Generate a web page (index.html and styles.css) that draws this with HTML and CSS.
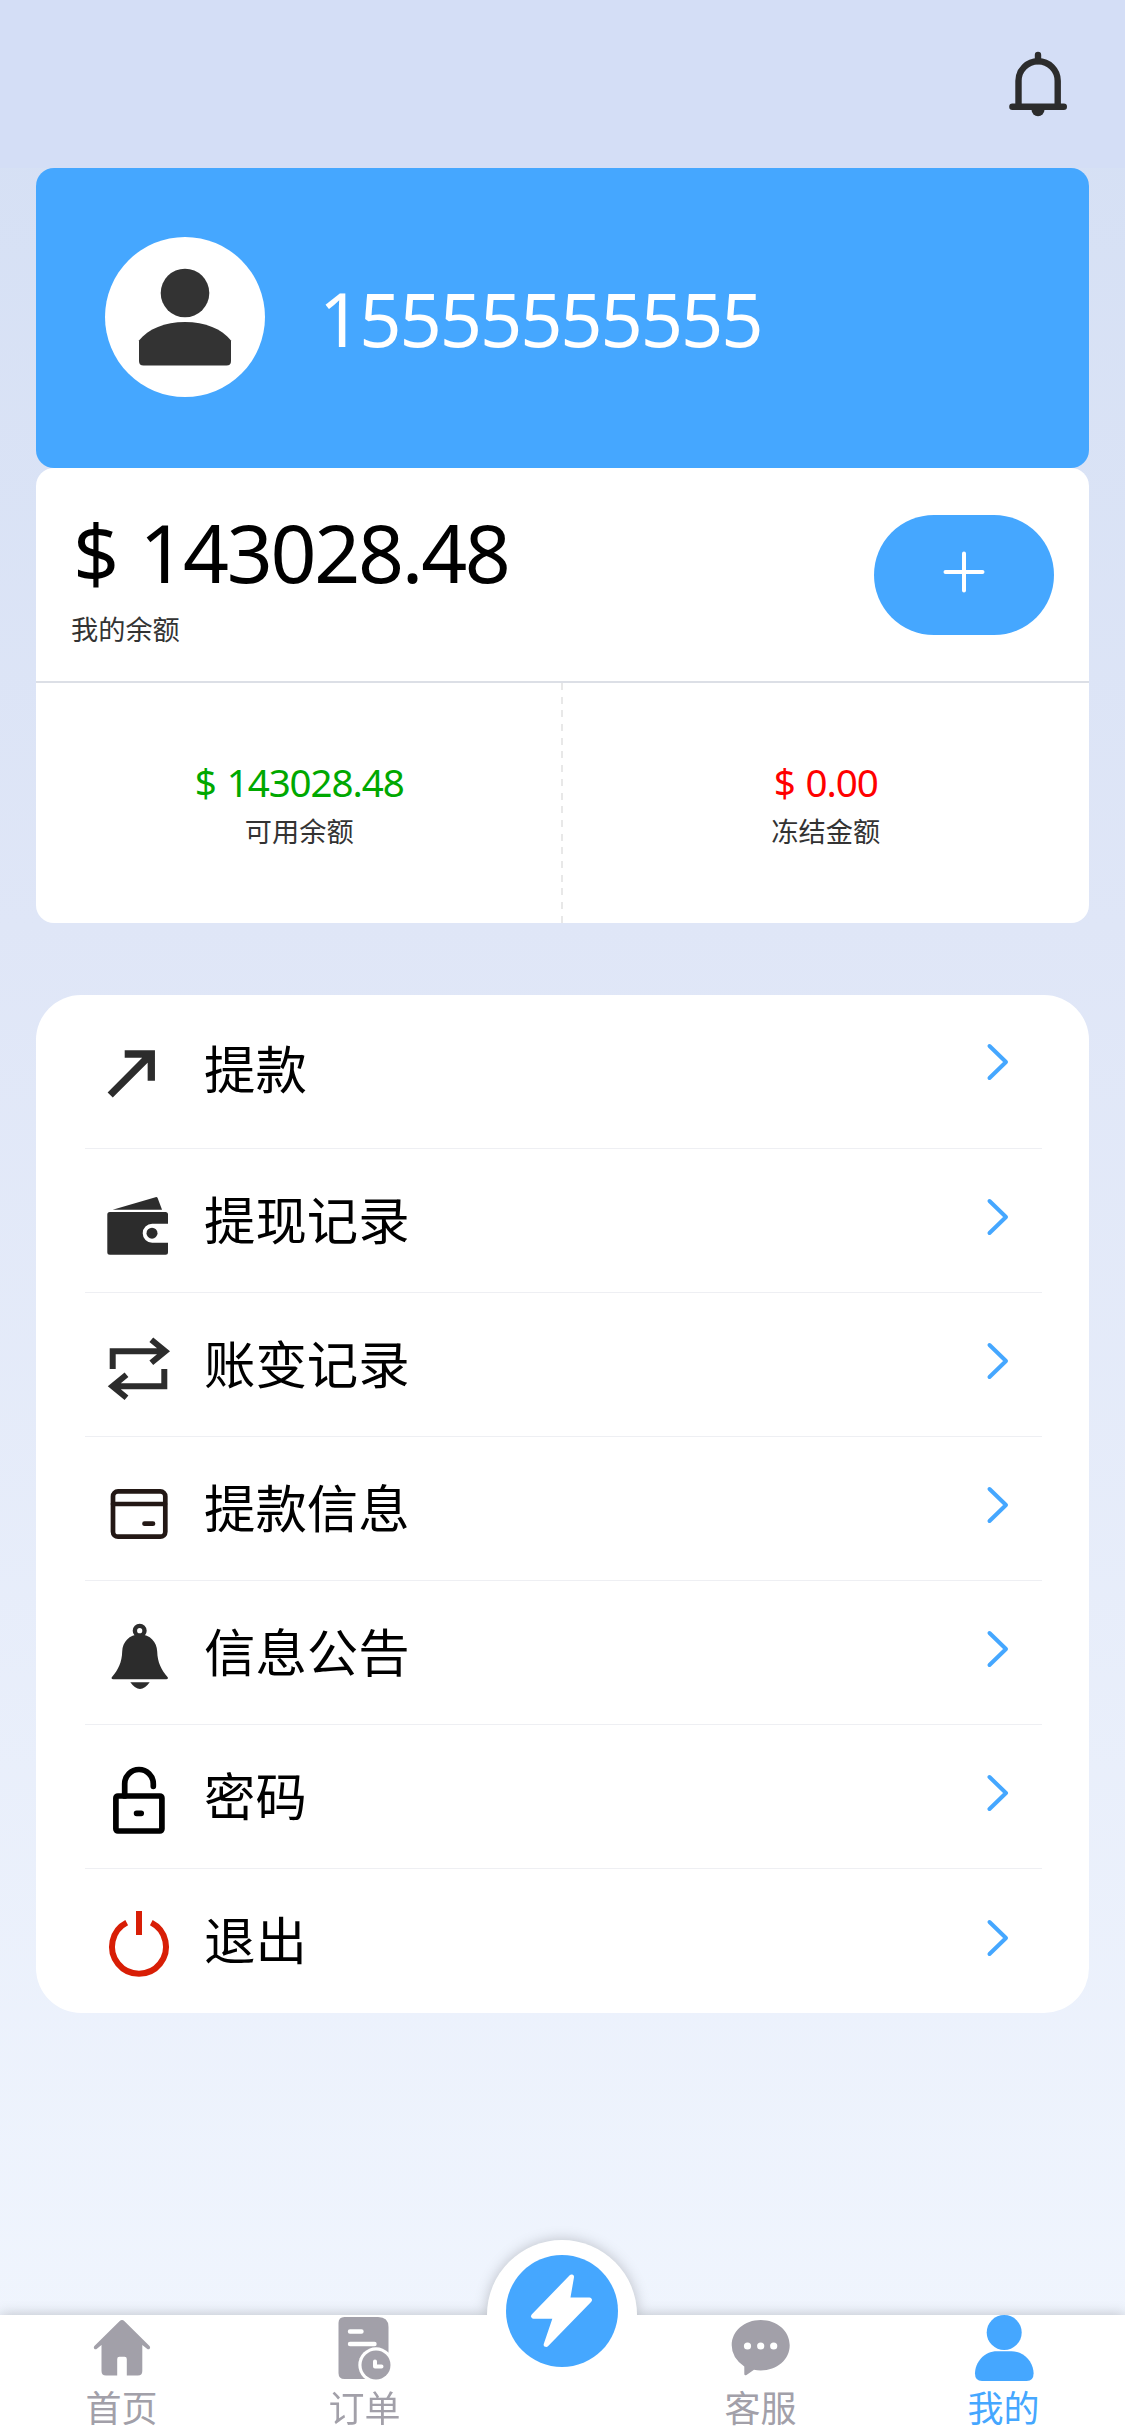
FILE: index.html
```html
<!DOCTYPE html>
<html lang="zh-CN">
<head>
<meta charset="utf-8">
<title>我的</title>
<link rel="stylesheet" href="styles.css">
</head>
<body>
<div class="page">
  <header class="header">
    <svg class="header-bell" viewBox="0 0 60 68" fill="none" stroke="#2c2c2c" stroke-width="6.4" stroke-linecap="round">
      <path d="M30 5v6M4.4 56.7h51.4"/>
      <path d="M10.5 55V30.8a19.6 19.6 0 0 1 39.2 0V55"/>
      <path d="M23.5 59.5a6.5 6.8 0 0 0 13 0z" fill="#2c2c2c" stroke="none"/>
    </svg>
  </header>

  <main class="content">
    <section class="profile">
      <div class="avatar">
        <svg viewBox="0 0 160 160" fill="#333">
          <circle cx="80" cy="56" r="24.3"/>
          <path d="M34 103.5C43 92 60 85 80 85s37 7 46 18.500V124q0 4.500-4.500 4.500h-83q-4.500 0-4.500-4.500z"/>
        </svg>
      </div>
      <span class="phone">15555555555</span>
    </section>

    <section class="balance">
      <div class="balance-total">
        <div>
          <div class="total-amount">$ 143028.48</div>
          <div class="label">我的余额</div>
        </div>
        <button class="add" aria-label="充值">
          <svg viewBox="0 0 42 42" stroke="#fff" stroke-width="4" stroke-linecap="round"><path d="M21 2.500v37M2.500 21h37"/></svg>
        </button>
      </div>
      <div class="balance-split">
        <div class="split-cell">
          <div class="amount available">$ 143028.48</div>
          <div class="label">可用余额</div>
        </div>
        <div class="split-cell">
          <div class="amount frozen">$ 0.00</div>
          <div class="label">冻结金额</div>
        </div>
      </div>
    </section>

    <nav class="menu">
      <a class="menu-row">
        <svg class="menu-icon" viewBox="0 0 66 72" fill="none" stroke="#2c2c2c" stroke-width="7.3"><path d="M5.200 61L45.500 20.700M19.700 20h26.600v26.700"/></svg>
        <span class="menu-text">提款</span>
        <svg class="chevron" viewBox="0 0 22 38"><path d="M2.500 3L19 19 2.500 35"/></svg>
      </a>
      <a class="menu-row">
        <svg class="menu-icon" viewBox="0 0 66 72" fill="#2c2c2c">
          <path d="M7.700 24.700L50.500 12.200q1.700-.4 2.300 1.200l4.200 11.300z"/>
          <path d="M4.800 27h55.700q2.500 0 2.500 2.500v9.200H47.200a9.500 9.500 0 0 0 0 19H63v9.500q0 2.500-2.500 2.500H4.800q-2.500 0-2.500-2.500V29.500q0-2.500 2.500-2.500z"/>
          <circle cx="47" cy="48.200" r="5.500"/>
        </svg>
        <span class="menu-text">提现记录</span>
        <svg class="chevron" viewBox="0 0 22 38"><path d="M2.500 3L19 19 2.500 35"/></svg>
      </a>
      <a class="menu-row">
        <svg class="menu-icon" viewBox="0 0 66 72" fill="none" stroke="#2c2c2c" stroke-width="6">
          <path d="M7.700 40V22.300h52M46.300 10.800l14 11.500-14 11.500"/>
          <path d="M59.300 40v17.300h-52M21.500 45.800l-14 11.500 14 11.500"/>
        </svg>
        <span class="menu-text">账变记录</span>
        <svg class="chevron" viewBox="0 0 22 38"><path d="M2.500 3L19 19 2.500 35"/></svg>
      </a>
      <a class="menu-row">
        <svg class="menu-icon" viewBox="0 0 66 72" fill="none" stroke="#231815" stroke-width="4.700" stroke-linecap="round">
          <rect x="8" y="18.400" width="52.300" height="45.300" rx="5"/>
          <path d="M8 31h52M39.500 50.700h8.500"/>
        </svg>
        <span class="menu-text">提款信息</span>
        <svg class="chevron" viewBox="0 0 22 38"><path d="M2.500 3L19 19 2.500 35"/></svg>
      </a>
      <a class="menu-row">
        <svg class="menu-icon" viewBox="0 0 66 72" fill="#2c2c2c">
          <circle cx="34.700" cy="13.700" r="4.800" fill="none" stroke="#2c2c2c" stroke-width="4.400"/>
          <path d="M34.700 17.500c10.500 0 17.100 7.500 17.500 17 .3 11 4 18 10.300 25.500 1 1.200.3 2.300-1.200 2.300H8.200c-1.500 0-2.200-1.100-1.200-2.300C13.300 52.500 16.900 45.500 17.200 34.500c.4-9.500 7-17 17.500-17z"/>
          <path d="M25.300 65.200h19.400q-9.700 13.500-19.400 0z"/>
        </svg>
        <span class="menu-text">信息公告</span>
        <svg class="chevron" viewBox="0 0 22 38"><path d="M2.500 3L19 19 2.500 35"/></svg>
      </a>
      <a class="menu-row">
        <svg class="menu-icon" viewBox="0 0 66 72" fill="none" stroke="#000" stroke-width="5.700" stroke-linecap="round">
          <rect x="10.900" y="35" width="46" height="35" rx="2"/>
          <path d="M19.700 35V22.800a14.300 14.300 0 0 1 28.600 0v2.500M31.600 52.300h4.600"/>
        </svg>
        <span class="menu-text">密码</span>
        <svg class="chevron" viewBox="0 0 22 38"><path d="M2.500 3L19 19 2.500 35"/></svg>
      </a>
      <a class="menu-row">
        <svg class="menu-icon" viewBox="0 0 66 72" fill="none" stroke="#d81e06" stroke-width="6">
          <path d="M21.700 17.700A27 27 0 1 0 46.300 17.700M34 6v24"/>
        </svg>
        <span class="menu-text">退出</span>
        <svg class="chevron" viewBox="0 0 22 38"><path d="M2.500 3L19 19 2.500 35"/></svg>
      </a>
    </nav>
  </main>

  <footer class="tabbar">
    <a class="tab">
      <svg class="tab-icon" viewBox="0 0 72 66" fill="#a2a0a9">
        <path d="M33.500 6.200q2.500-2.400 5 0L63.500 31q1.200 1.400.2 2.700-1.300 1.200-2.700 0L56.300 30v26q0 4.500-4.500 4.500H40.800V44q0-2.200-2.200-2.200h-5.200q-2.200 0-2.200 2.200v16.500H20q-4.500 0-4.500-4.500V30l-4.600 3.700q-1.400 1.200-2.700 0-1-1.300.2-2.700z"/>
      </svg>
      <span>首页</span>
    </a>
    <a class="tab">
      <svg class="tab-icon" viewBox="0 0 72 66" fill="#a2a0a9">
        <path d="M15.500 2H49q10.500 0 10.500 10V64h-44q-6 0-6-6V8q0-6 6-6z"/>
        <path d="M21 16.500h11.500M21 29h24.500" stroke="#fff" stroke-width="4.400" stroke-linecap="round"/>
        <path d="M47 50h20v18H35z" fill="#fff"/>
        <circle cx="47" cy="50" r="17.700" fill="#fff"/>
        <circle cx="47" cy="50" r="14.500"/>
        <path d="M46 46.500v5h6.500" fill="none" stroke="#fff" stroke-width="4" stroke-linecap="round" stroke-linejoin="round"/>
      </svg>
      <span>订单</span>
    </a>
    <a class="tab-center">
      <span class="bolt">
        <svg viewBox="0 0 112 112" fill="#fff" stroke="#fff" stroke-width="5" stroke-linejoin="round"><path d="M65.500 22L27.500 61.200H49.800L40.200 89.500 83.500 45H61.500z"/></svg>
      </span>
    </a>
    <a class="tab">
      <svg class="tab-icon" viewBox="0 0 72 66" fill="#a2a0a9">
        <path d="M35.700 5C52 5 64.700 16 64.700 30.300S52 55.500 35.700 55.500q-3.700 0-6.700-.7l-7.500 5.200q-2.200 1-2.200-1.200v-7.300Q6.700 43 6.700 30.300C6.700 16 19.500 5 35.700 5z"/>
        <g fill="#fff"><circle cx="22.500" cy="31" r="3.600"/><circle cx="35.700" cy="31" r="3.600"/><circle cx="48.700" cy="31" r="3.600"/></g>
      </svg>
      <span>客服</span>
    </a>
    <a class="tab active">
      <svg class="tab-icon" viewBox="0 0 72 66" fill="#45a7ff">
        <circle cx="36.200" cy="17.500" r="17.500"/>
        <path d="M29 36.200h14.500C56 36.200 65.600 47 65.600 58.500q0 7.500-7 7.500H14q-7 0-7-7.500C7 47 16.500 36.200 29 36.200z"/>
      </svg>
      <span>我的</span>
    </a>
  </footer>
</div>
</body>
</html>
```
FILE: styles.css
```css
* {
  box-sizing: border-box;
}

body {
  margin: 0;
  font-family: "Noto Sans", "Noto Sans CJK SC", sans-serif;
  color: #000;
}

svg {
  display: block;
  overflow: visible;
  flex: none;
}

.page {
  display: flex;
  flex-direction: column;
  width: 1125px;
  height: 2436px;
  overflow: hidden;
  background: linear-gradient(#d4dff4, #dfe6f7 38%, #f1f6fe);
}

.header {
  display: flex;
  justify-content: flex-end;
  height: 168px;
  padding: 50px 57px 0 0;
  background: #d4def6;
}

.header-bell {
  width: 60px;
  height: 68px;
}

.content {
  flex: 1;
  padding: 0 36px;
}

.profile {
  display: flex;
  align-items: center;
  gap: 54px;
  height: 300px;
  padding: 0 69px 2px;
  border-radius: 18px;
  background: #45a7ff;
}

.avatar {
  width: 160px;
  height: 160px;
  border-radius: 50%;
  background: #fff;
}

.phone {
  padding-top: 4px;
  color: #fff;
  font-size: 74px;
  line-height: 100px;
  letter-spacing: -2.1px;
}

.balance {
  height: 455px;
  border-radius: 18px;
  background: #fff;
}

.balance-total {
  display: flex;
  justify-content: space-between;
  height: 215px;
  padding: 34px 35px 0;
  border-bottom: 2px solid #dcdfe6;
}

.total-amount {
  padding-left: 2px;
  font-size: 80.5px;
  line-height: 100px;
  letter-spacing: -2.3px;
  word-spacing: 4px;
}

.label {
  color: #333;
  font-family: "Noto Sans CJK SC", sans-serif;
  font-size: 27.2px;
  line-height: 36px;
}

.total-amount + .label {
  padding-top: 8px;
}

.add {
  display: flex;
  justify-content: center;
  width: 180px;
  height: 120px;
  margin-top: 13px;
  padding: 36px 0 0;
  border: 0;
  border-radius: 60px;
  background: #45a7ff;
}

.add svg {
  width: 42px;
  height: 42px;
}

.balance-split {
  display: flex;
  height: 240px;
}

.split-cell {
  flex: 1;
  padding-top: 72px;
  text-align: center;
}

.split-cell:first-child {
  background: repeating-linear-gradient(#e8e8e8 0 7px, transparent 7px 13.700px) right / 2px 100% no-repeat;
}

.amount {
  padding-bottom: 3px;
  font-size: 38.6px;
  line-height: 54px;
  letter-spacing: -1.1px;
  word-spacing: 2px;
}

.available {
  color: #00a800;
}

.frozen {
  color: #f00;
}

.menu {
  height: 1018px;
  margin-top: 72px;
  padding: 0 47px 0 49px;
  border-radius: 45px;
  background: #fff;
}

.menu-row {
  display: flex;
  align-items: center;
  height: 144px;
  padding: 0 33px 0 20px;
  border-bottom: 1px solid #eeeff3;
}

.menu-row:first-child {
  height: 154px;
  padding-bottom: 4px;
}

.menu-row:last-child {
  border-bottom: 0;
}

.menu-icon {
  width: 66px;
  height: 72px;
}

.menu-text {
  flex: 1;
  margin-left: 33px;
  padding-bottom: 6px;
  font-family: "Noto Sans CJK SC", sans-serif;
  font-size: 51.4px;
  line-height: 74px;
}

.chevron {
  width: 22px;
  height: 38px;
  margin-bottom: 7px;
  fill: none;
  stroke: #45a7ff;
  stroke-width: 4;
  stroke-linecap: round;
  stroke-linejoin: round;
}

.menu-row:first-child .chevron {
  margin-bottom: 16px;
}

.tabbar {
  display: flex;
  height: 121px;
  background: #fff;
  filter: drop-shadow(0 0 7px rgba(0, 0, 0, 0.22));
}

.tab {
  display: flex;
  flex-direction: column;
  align-items: center;
  width: 243px;
  color: #a2a0a9;
  font-family: "Noto Sans CJK SC", sans-serif;
  font-size: 36px;
  line-height: 50px;
}

.tab.active {
  color: #45a7ff;
}

.tab-icon {
  width: 72px;
  height: 66px;
}

.tab-center {
  display: flex;
  justify-content: center;
  width: 150px;
  height: 150px;
  margin: -75px 2px 0 1px;
  padding-top: 15px;
  border-radius: 50%;
  background: #fff;
}

.bolt {
  width: 112px;
  height: 112px;
  border-radius: 50%;
  background: #45a7ff;
}
```
